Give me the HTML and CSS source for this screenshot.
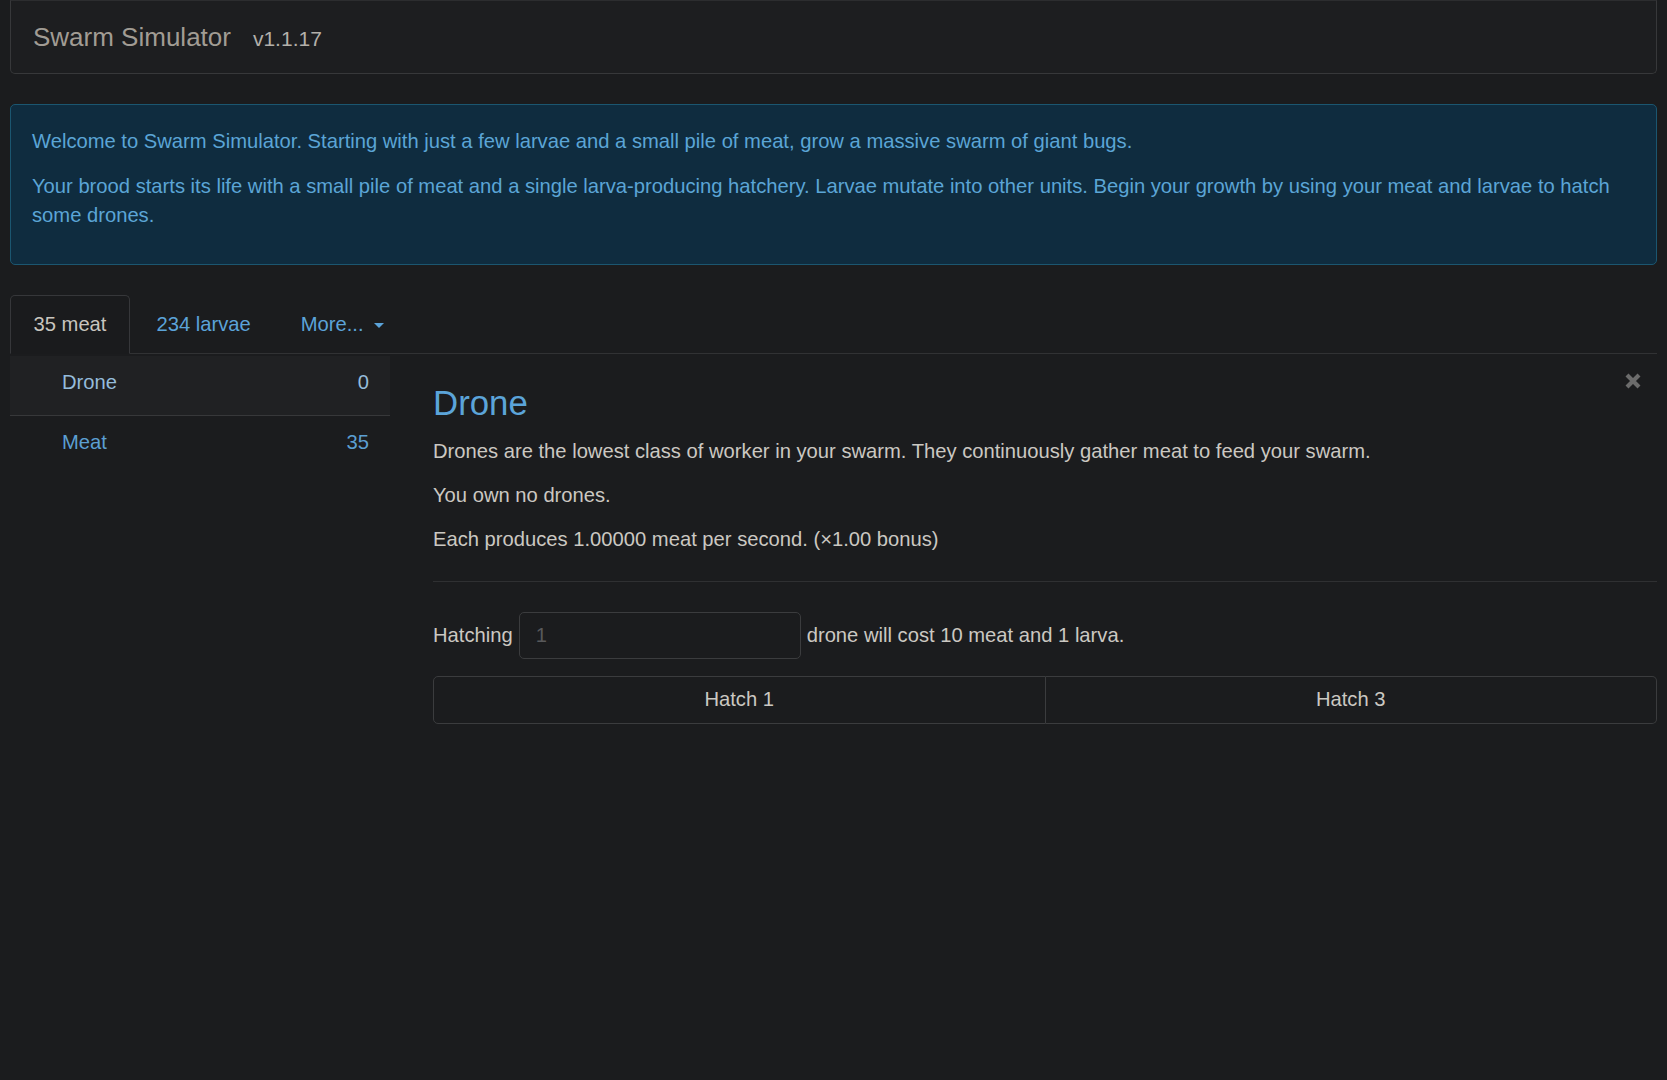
FILE: index.html
```html
<!DOCTYPE html>
<html lang="en">
  <head>
    <meta charset="UTF-8" />
    <meta name="viewport" content="width=device-width, initial-scale=1.0" />
    <title>Swarm Simulator</title>
    <link rel="stylesheet" href="styles.css">
  </head>

  <body>
    <nav class="navbar">
      <span class="brand">Swarm Simulator</span>
      <span class="version">v1.1.17</span>
    </nav>

    <div class="alert">
      <p>Welcome to Swarm Simulator. Starting with just a few larvae and a small pile of meat, grow a massive swarm of giant bugs.</p>
      <p>Your brood starts its life with a small pile of meat and a single larva-producing hatchery. Larvae mutate into other units. Begin your growth by using your meat and larvae to hatch some drones.</p>
    </div>

    <ul class="tabs">
      <li class="tab active"><a>35 meat</a></li>
      <li class="tab"><a>234 larvae</a></li>
      <li class="tab"><a>More... <span class="caret"></span></a></li>
    </ul>

    <div class="main">
      <div class="unitList">
        <div class="unitRow selected">
          <span class="unitName">Drone</span>
          <span class="unitCount">0</span>
        </div>
        <div class="unitRow">
          <span class="unitName">Meat</span>
          <span class="unitCount">35</span>
        </div>
      </div>

      <div class="unitDetail">
        <button class="close" title="close">
          <svg width="18" height="18" viewBox="0 0 18 18">
            <path d="M3 3 L15 15 M15 3 L3 15" stroke="currentColor" stroke-width="4.2" stroke-linecap="butt" />
          </svg>
        </button>
        <h3>Drone</h3>
        <p>Drones are the lowest class of worker in your swarm. They continuously gather meat to feed your swarm.</p>
        <p>You own no drones.</p>
        <p>Each produces 1.00000 meat per second. (&times;1.00 bonus)</p>
        <hr />

        <div class="hatchForm">
          <label>Hatching</label>
          <input type="text" placeholder="1" />
          <span>drone will cost 10 meat and 1 larva.</span>
        </div>

        <div class="btnGroup">
          <button class="btn">Hatch 1</button>
          <button class="btn">Hatch 3</button>
        </div>
      </div>
    </div>
  </body>
</html>
```

FILE: styles.css
```css
* {
  margin: 0px;
  padding: 0px;
  box-sizing: border-box;
}
body {
  background-color: #1b1c1e;
  color: #cbc8c2;
  font-family: "Liberation Sans", Arial, sans-serif;
  font-size: 20.2px;
  line-height: 29px;
  padding: 0 10px;
  min-height: 1080px;
}

/* top bar */
.navbar {
  height: 74px;
  display: flex;
  align-items: center;
  padding-left: 22px;
  background-color: #1d1e20;
  border: 1.5px solid #37383a;
  border-top-color: #2c2d2f;
  border-radius: 0 0 5px 5px;
}
.brand {
  font-size: 26px;
  color: #a19c94;
  margin-right: 22px;
}
.version {
  font-size: 21px;
  color: #b3b0aa;
  padding-top: 3px;
}

/* welcome box */
.alert {
  margin-top: 30px;
  padding: 22px 21px 0 21px;
  background-color: #0f2c3f;
  border: 1.5px solid #1b5670;
  border-radius: 5px;
  color: #5ba5d6;
  height: 161px;
}
.alert p {
  margin-bottom: 16px;
}

/* tabs */
.tabs {
  list-style: none;
  display: flex;
  margin-top: 30px;
  border-bottom: 1.5px solid #313234;
}
.tab {
  margin-right: 3px;
  margin-bottom: -1.5px;
}
.tab a {
  display: block;
  padding: 14px 22.5px 14px 22.5px;
  color: #5ba3d9;
  border: 1.5px solid transparent;
  border-radius: 5px 5px 0 0;
}
.tab.active a {
  color: #c8c5bf;
  border-color: #36373a;
  border-bottom-color: #1a1b1d;
  background-color: #1a1b1d;
}
.caret {
  display: inline-block;
  width: 0;
  height: 0;
  margin-left: 5px;
  vertical-align: middle;
  border-top: 5.6px solid #5ba3d9;
  border-left: 5.6px solid transparent;
  border-right: 5.6px solid transparent;
}

/* layout */
.main {
  display: grid;
  grid-template-columns: 380px 1fr;
  column-gap: 43px;
}

/* unit list */
.unitList {
  padding-top: 2px;
}
.unitRow {
  display: flex;
  justify-content: space-between;
  padding: 12px 21px 18px 52px;
  color: #5b9fd2;
  border-bottom: 1.5px solid transparent;
}
.unitRow.selected {
  background-color: #202123;
  border-bottom-color: #37383a;
  color: #95bcdb;
}

/* unit detail */
.unitDetail {
  padding-top: 30px;
}
.close {
  float: right;
  margin-top: -12px;
  margin-right: 15px;
  background: none;
  border: none;
  color: #6c6c6c;
  cursor: pointer;
}
.close svg {
  display: block;
}
.unitDetail h3 {
  font-size: 34.8px;
  font-weight: 400;
  line-height: 37px;
  color: #5ba4d9;
  margin-bottom: 16px;
}
.unitDetail p {
  margin-bottom: 15px;
}
hr {
  border: none;
  border-top: 1.5px solid #2f3032;
  margin-top: 27px;
  margin-bottom: 30px;
}

.hatchForm {
  display: flex;
  align-items: center;
  gap: 6px;
}
.hatchForm input {
  width: 282px;
  height: 47px;
  padding: 0 16px;
  font-family: inherit;
  font-size: 20.2px;
  color: #cbc8c2;
  background-color: #1b1c1e;
  border: 1.5px solid #3b3c3e;
  border-radius: 5px;
  outline: none;
}
.hatchForm input::placeholder {
  color: #58595b;
}

.btnGroup {
  display: flex;
  margin-top: 17px;
}
.btn {
  flex: 1;
  height: 48px;
  font-family: inherit;
  font-size: 20.2px;
  color: #cbc8c2;
  background-color: #1b1c1e;
  border: 1.5px solid #3b3c3e;
  cursor: pointer;
}
.btn:first-child {
  border-radius: 5px 0 0 5px;
}
.btn:last-child {
  border-left: none;
  border-radius: 0 5px 5px 0;
}
```
